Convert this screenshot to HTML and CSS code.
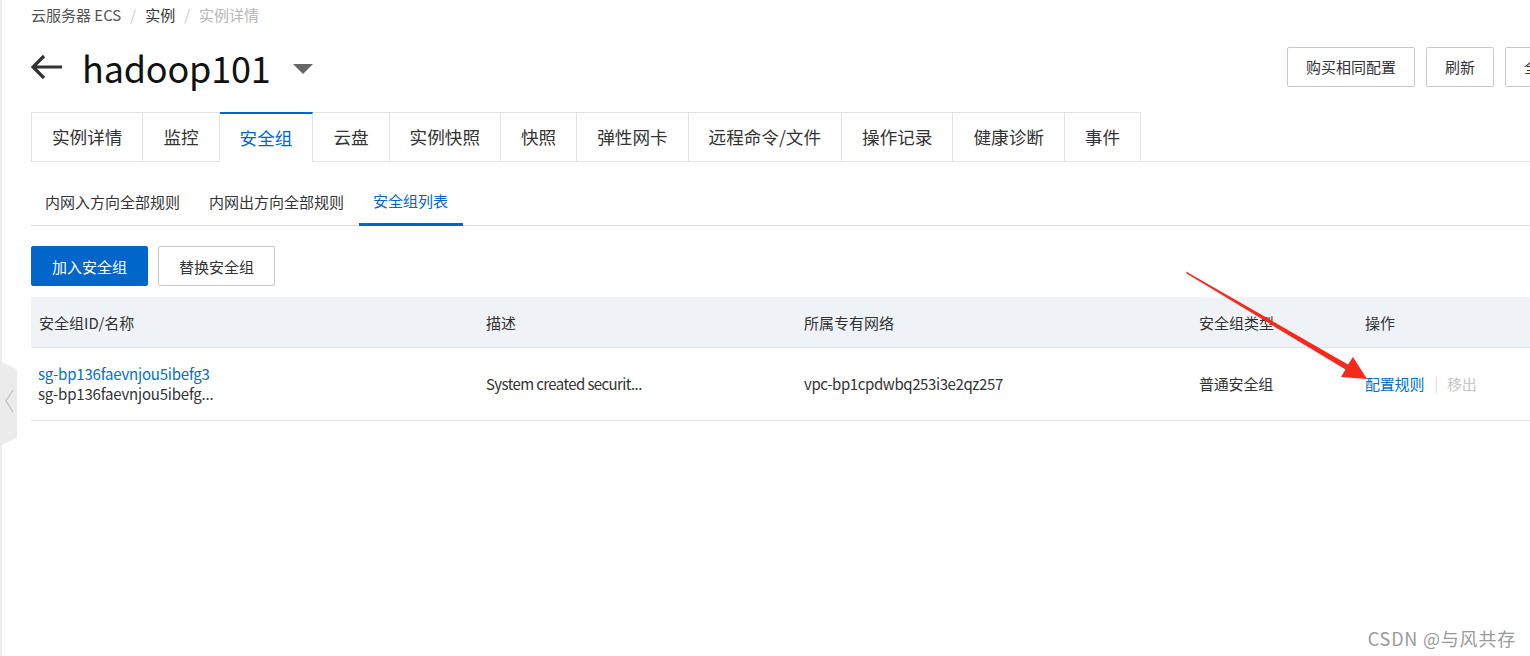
FILE: index.html
```html
<!DOCTYPE html>
<html lang="zh-CN">
<head>
<meta charset="utf-8">
<title>hadoop101 - 安全组</title>
<link rel="stylesheet" href="styles.css">
</head>
<body>
<div class="page">
  <div class="collapse-handle">
    <svg width="10" height="24" viewBox="0 0 10 24"><path d="M9 1 L2 12 L9 23" fill="none" stroke="#c2c2c2" stroke-width="1.3"/></svg>
  </div>
  <div class="main">
    <div class="breadcrumb">
      <span class="bc-root">云服务器 ECS</span>
      <span class="bc-sep">/</span>
      <span class="bc-mid">实例</span>
      <span class="bc-sep">/</span>
      <span class="bc-cur">实例详情</span>
    </div>

    <div class="title-row">
      <div class="title-left">
        <svg class="back" width="32" height="26" viewBox="0 0 32 26"><path d="M31 13 H3 M13 2 L2 13 L13 24" fill="none" stroke="#333" stroke-width="3.2" stroke-linejoin="miter"/></svg>
        <h1 class="title">hadoop101</h1>
        <span class="caret"></span>
      </div>
      <div class="title-actions">
        <button class="btn">购买相同配置</button>
        <button class="btn">刷新</button>
        <button class="btn">全部操作</button>
      </div>
    </div>

    <div class="tabs">
      <div class="tab">实例详情</div>
      <div class="tab">监控</div>
      <div class="tab active">安全组</div>
      <div class="tab">云盘</div>
      <div class="tab">实例快照</div>
      <div class="tab">快照</div>
      <div class="tab">弹性网卡</div>
      <div class="tab">远程命令/文件</div>
      <div class="tab">操作记录</div>
      <div class="tab">健康诊断</div>
      <div class="tab">事件</div>
    </div>

    <div class="subtabs">
      <div class="subtab">内网入方向全部规则</div>
      <div class="subtab">内网出方向全部规则</div>
      <div class="subtab active">安全组列表</div>
    </div>

    <div class="actions">
      <button class="btn primary">加入安全组</button>
      <button class="btn">替换安全组</button>
    </div>

    <table class="grid">
      <colgroup>
        <col class="c1"><col class="c2"><col class="c3"><col class="c4"><col class="c5">
      </colgroup>
      <thead>
        <tr>
          <th>安全组ID/名称</th>
          <th>描述</th>
          <th>所属专有网络</th>
          <th>安全组类型</th>
          <th>操作</th>
        </tr>
      </thead>
      <tbody>
        <tr>
          <td>
            <div class="link">sg-bp136faevnjou5ibefg3</div>
            <div>sg-bp136faevnjou5ibefg...</div>
          </td>
          <td class="narrow">System created securit...</td>
          <td class="mid">vpc-bp1cpdwbq253i3e2qz257</td>
          <td>普通安全组</td>
          <td><span class="link">配置规则</span><span class="op-sep">|</span><span class="disabled">移出</span></td>
        </tr>
      </tbody>
    </table>
  </div>

  <svg class="annot" width="1530" height="656" viewBox="0 0 1530 656">
    <polygon points="1186,271.5 1348,364.5 1353,357 1367,379 1341,377 1345.5,369.5 1186.5,273.5" fill="#f5291c"/>
  </svg>
  <div class="watermark">CSDN @与风共存</div>
</div>
</body>
</html>
```

FILE: styles.css
```css
html, body {
  margin: 0;
  padding: 0;
  background: #fff;
}
body {
  width: 1530px;
  height: 656px;
  overflow: hidden;
  font-family: "Noto Sans CJK SC", "Noto Sans", sans-serif;
  color: #333;
}
.page {
  position: relative;
  height: 656px;
  border-left: 2px solid #ececec;
  box-sizing: border-box;
}
.collapse-handle {
  position: absolute;
  left: -2px;
  top: 361px;
  width: 17px;
  height: 85px;
  background: #ebebeb;
  clip-path: polygon(0 0, 100% 10%, 100% 90%, 0 100%);
  display: flex;
  align-items: center;
  justify-content: center;
}
.collapse-handle svg { margin-top: -6px; }
.main {
  margin-left: 29px;
  width: 1572px;
}
.breadcrumb {
  height: 29px;
  display: flex;
  align-items: center;
  font-size: 15px;
  gap: 9px;
}
.bc-root { color: #555; }
.bc-mid { color: #333; }
.bc-sep { color: #ccc; }
.bc-cur { color: #b5b5b5; }

.title-row {
  display: flex;
  justify-content: space-between;
  align-items: center;
  margin-top: 10px;
  height: 56px;
}
.title-left {
  display: flex;
  align-items: center;
}
.back { display: block; margin-top: 0; }
.title {
  margin: 0 0 0 19px;
  font-size: 36px;
  font-weight: 400;
  color: #111;
  line-height: 56px;
  letter-spacing: -0.2px;
}
.caret {
  width: 0;
  height: 0;
  border-left: 10px solid transparent;
  border-right: 10px solid transparent;
  border-top: 10px solid #666;
  margin-left: 22px;
  margin-top: 4px;
}
.title-actions {
  display: flex;
  gap: 11px;
  margin-top: -1px;
}
.btn {
  height: 40px;
  padding: 0 19px;
  border: 1px solid #c6c9ce;
  border-radius: 2px;
  background: #fff;
  color: #333;
  font-family: inherit;
  font-size: 15px;
  cursor: pointer;
}
.title-actions .btn { padding: 0 18px; }
.btn.primary {
  background: #0066cc;
  border-color: #0066cc;
  color: #fff;
  padding: 0 20px;
}
.actions .btn:not(.primary) { padding: 0 20px; }

.tabs {
  display: flex;
  margin-top: 17px;
  border-bottom: 1px solid #e3e3e3;
  height: 49px;
}
.tab {
  height: 49px;
  box-sizing: border-box;
  padding: 0 20px;
  border: 1px solid #e3e3e3;
  border-left: none;
  border-bottom: none;
  font-size: 17.6px;
  line-height: 48px;
  color: #333;
  background: #fff;
}
.tab:first-child { border-left: 1px solid #e3e3e3; }
.tab.active {
  border-top: 2px solid #0066cc;
  line-height: 47px;
  color: #0066cc;
  height: 50px;
  margin-bottom: -1px;
}

.subtabs {
  display: flex;
  margin-top: 18px;
  border-bottom: 1px solid #dedede;
  height: 45px;
}
.subtab {
  padding: 0 15px 0 14px;
  font-size: 15px;
  line-height: 43px;
  color: #333;
  box-sizing: border-box;
  height: 45px;
}
.subtab.active {
  color: #0066cc;
  border-bottom: 3px solid #0066cc;
  line-height: 41px;
  margin-bottom: -1px;
  height: 46px;
}

.actions {
  display: flex;
  gap: 10px;
  margin-top: 20px;
}

.grid {
  margin-top: 11px;
  border-collapse: collapse;
  table-layout: fixed;
  width: 1572px;
  font-size: 15px;
}
.c1 { width: 447px; }
.c2 { width: 318px; }
.c3 { width: 395px; }
.c4 { width: 166px; }
.grid th {
  background: #eff2f6;
  height: 50px;
  text-align: left;
  font-weight: 400;
  color: #333;
  padding: 0 8px;
  border-bottom: 1px solid #e0e4ea;
}
.grid td {
  height: 72px;
  padding: 0 8px;
  border-bottom: 1px solid #e0e4ea;
  color: #333;
  line-height: 20px;
  white-space: nowrap;
  letter-spacing: -0.2px;
}
.grid td:first-child { padding-left: 7px; }
.grid td.narrow { letter-spacing: -0.6px; }
.grid td.mid { letter-spacing: -0.4px; }
.link { color: #0070cc; }
.op-sep { color: #ddd; margin: 0 9px 0 10px; }
.disabled { color: #c5c5c5; }

.annot {
  position: absolute;
  left: -2px;
  top: 0;
  pointer-events: none;
}
.watermark {
  position: absolute;
  right: 14px;
  bottom: 5px;
  font-size: 18px;
  color: #9a9a9a;
  letter-spacing: 0.8px;
  text-shadow: 0 0 1px #fff;
}
```
